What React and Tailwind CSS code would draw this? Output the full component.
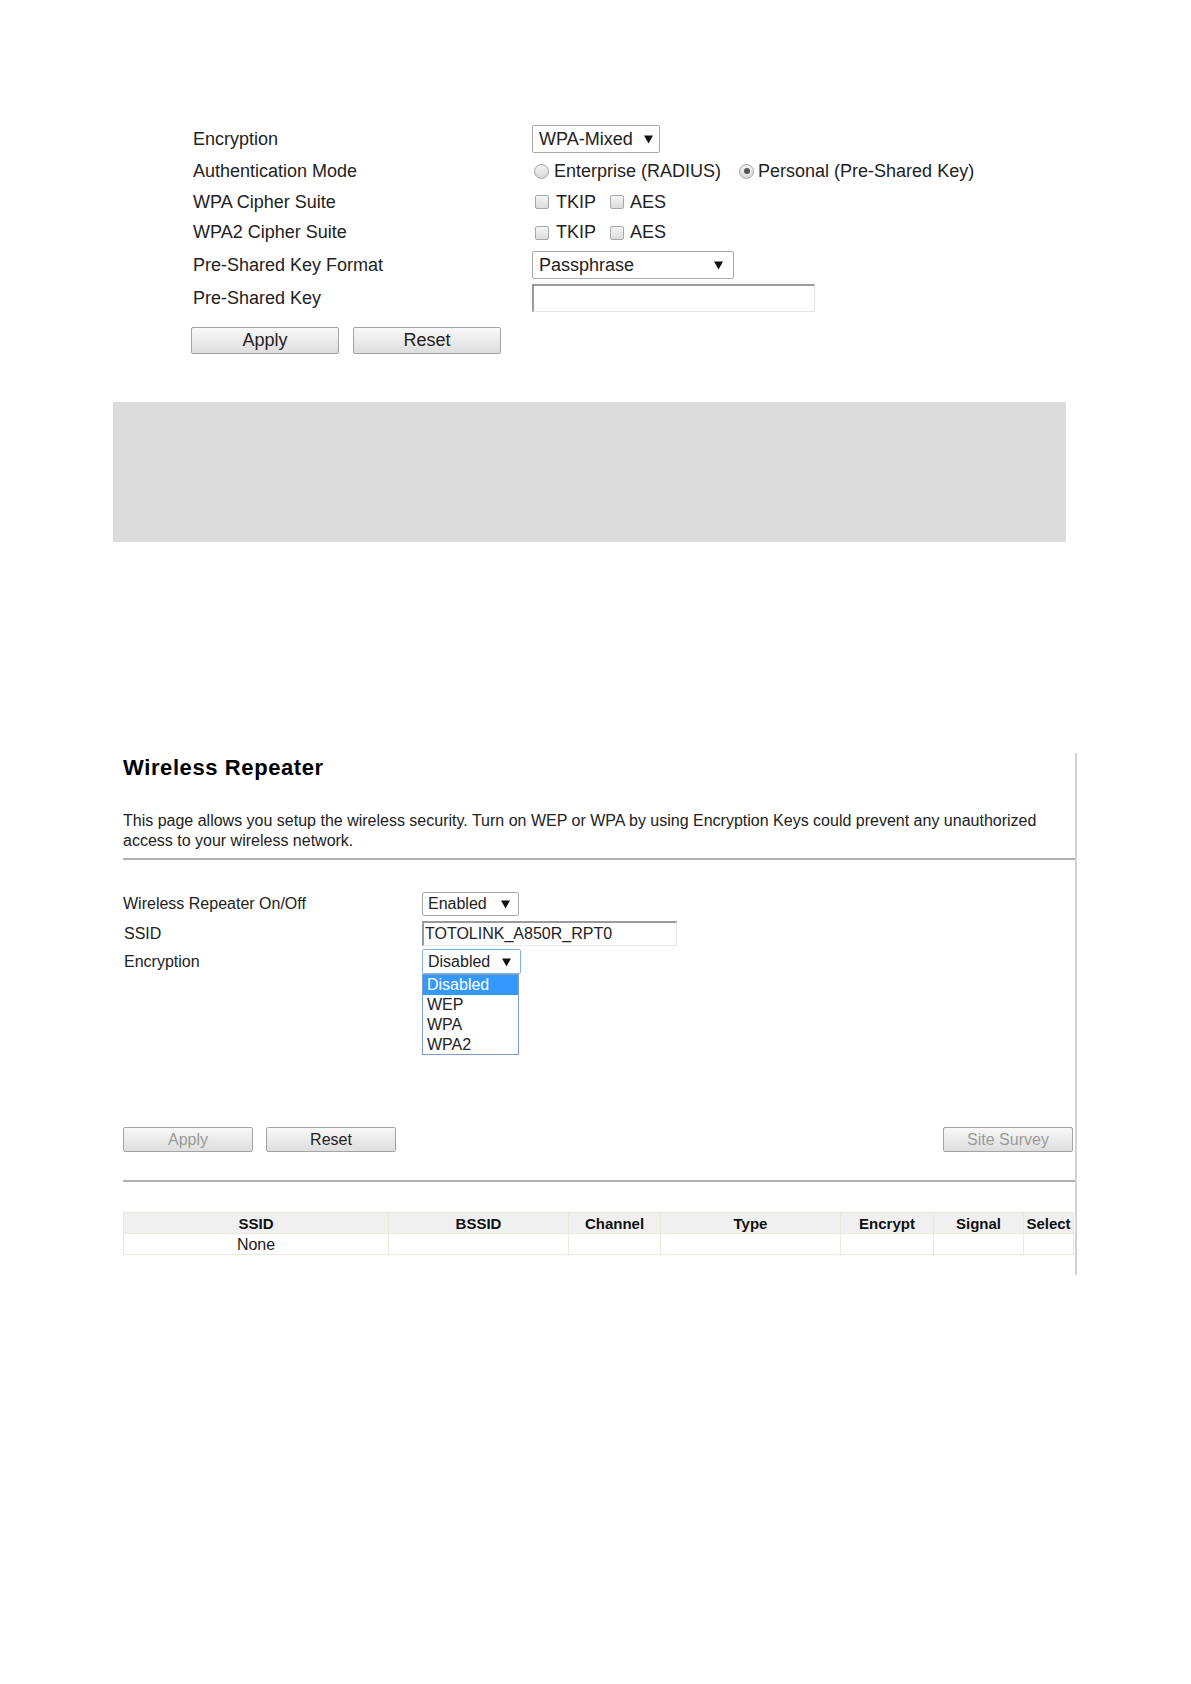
import React from "react";

function Arrow() {
  return (
    <svg width="9" height="10" viewBox="0 0 9 10" className="shrink-0">
      <path d="M0 1.5h9L4.5 9.5z" fill="#111" />
    </svg>
  );
}

function Radio({ checked }) {
  return (
    <span className="flex h-[15px] w-[15px] shrink-0 items-center justify-center rounded-full border border-[#a3a3a3] bg-gradient-to-b from-[#f4f4f4] to-[#d9d9d9]">
      {checked && <span className="h-[6px] w-[6px] rounded-full bg-[#555]"></span>}
    </span>
  );
}

function Check() {
  return (
    <span className="block h-[14px] w-[14px] shrink-0 rounded-[2px] border border-[#a8a8a8] bg-gradient-to-b from-[#f5f5f5] to-[#dcdcdc]"></span>
  );
}

function Btn({ label, disabled, big }) {
  return (
    <div
      className={
        big
          ? "flex h-[27px] w-[148px] items-center justify-center rounded-[2px] border border-[#a3a3a3] bg-gradient-to-b from-[#f8f8f8] to-[#dedede] text-[18px] text-[#222]"
          : disabled
          ? "flex h-[25px] w-[130px] items-center justify-center rounded-[2px] border border-[#a3a3a3] bg-gradient-to-b from-[#f8f8f8] to-[#dedede] text-[16px] text-[#9a9a9a]"
          : "flex h-[25px] w-[130px] items-center justify-center rounded-[2px] border border-[#a3a3a3] bg-gradient-to-b from-[#f8f8f8] to-[#dedede] text-[16px] text-[#222]"
      }
    >
      {label}
    </div>
  );
}

const columns = [
  { name: "SSID", w: "w-[265px]" },
  { name: "BSSID", w: "w-[180px]" },
  { name: "Channel", w: "w-[92px]" },
  { name: "Type", w: "w-[180px]" },
  { name: "Encrypt", w: "w-[93px]" },
  { name: "Signal", w: "w-[90px]" },
  { name: "Select", w: "w-[50px]" },
];

function CipherRow({ label }) {
  return (
    <>
      <div className="w-[339px]">{label}</div>
      <div className="ml-[3px] flex items-center">
        <Check />
        <span className="ml-[7px]">TKIP</span>
        <div className="ml-[14px]">
          <Check />
        </div>
        <span className="ml-[6px]">AES</span>
      </div>
    </>
  );
}

export default function App() {
  return (
    <div className="min-h-[1684px] w-[1191px] bg-white font-['Liberation_Sans',Arial,sans-serif] text-[#222]">
      {/* Security settings */}
      <div className="pl-[193px] pt-[123px] text-[18px]">
        <div className="flex h-[32px] items-center">
          <div className="w-[339px]">Encryption</div>
          <div className="flex h-[28px] w-[128px] items-center justify-between rounded-[2px] border border-[#a9a9a9] pl-[6px] pr-[6px]">
            <span>WPA-Mixed</span>
            <Arrow />
          </div>
        </div>
        <div className="flex h-[32px] items-center">
          <div className="w-[339px]">Authentication Mode</div>
          <div className="ml-[2px] flex items-center">
            <Radio />
            <span className="ml-[5px]">Enterprise (RADIUS)</span>
            <div className="ml-[18px]">
              <Radio checked />
            </div>
            <span className="ml-[4px]">Personal (Pre-Shared Key)</span>
          </div>
        </div>
        <div className="flex h-[30px] items-center">
          <CipherRow label="WPA Cipher Suite" />
        </div>
        <div className="flex h-[31px] items-center">
          <CipherRow label="WPA2 Cipher Suite" />
        </div>
        <div className="flex h-[34px] items-center">
          <div className="w-[339px]">Pre-Shared Key Format</div>
          <div className="flex h-[28px] w-[202px] items-center justify-between rounded-[2px] border border-[#a9a9a9] pl-[6px] pr-[10px]">
            <span>Passphrase</span>
            <Arrow />
          </div>
        </div>
        <div className="flex h-[32px] items-center">
          <div className="w-[339px]">Pre-Shared Key</div>
          <div className="h-[28px] w-[283px] border-b border-l-2 border-r border-t-2 border-b-[#e6e6e6] border-l-[#9a9a9a] border-r-[#e6e6e6] border-t-[#9a9a9a] bg-white"></div>
        </div>
        <div className="ml-[-2px] mt-[13px] flex gap-[14px]">
          <Btn label="Apply" big />
          <Btn label="Reset" big />
        </div>
      </div>

      <div className="ml-[113px] mt-[48px] h-[140px] w-[953px] bg-[#dcdcdc]"></div>

      {/* Wireless Repeater */}
      <div className="ml-[123px] mt-[211px] h-[522px] w-[954px] border-r-2 border-[#d2d2d2] pt-[4px]">
        <h1 className="text-[22px] font-bold leading-[22px] tracking-[0.6px] text-black">Wireless Repeater</h1>
        <p className="mt-[32px] text-[16px] leading-[20px]">
          This page allows you setup the wireless security. Turn on WEP or WPA by using Encryption Keys could prevent any unauthorized access to your wireless network.
        </p>
        <div className="mt-[7px] border-t-2 border-[#b2b2b2]"></div>

        <div className="mt-[30px] text-[16px]">
          <div className="flex h-[28px] items-center">
            <div className="w-[299px]">Wireless Repeater On/Off</div>
            <div className="flex h-[24px] w-[97px] items-center justify-between rounded-[2px] border border-[#a9a9a9] pl-[5px] pr-[8px]">
              <span>Enabled</span>
              <Arrow />
            </div>
          </div>
          <div className="flex h-[31px] items-center">
            <div className="w-[299px] pl-[1px]">SSID</div>
            <div className="flex h-[25px] w-[255px] items-center border-b border-l-2 border-r border-t-2 border-b-[#e6e6e6] border-l-[#9a9a9a] border-r-[#e6e6e6] border-t-[#9a9a9a] pl-[1px]">
              TOTOLINK_A850R_RPT0
            </div>
          </div>
          <div className="flex h-[25px] items-center">
            <div className="w-[299px] pl-[1px]">Encryption</div>
            <div className="relative">
              <div className="flex h-[25px] w-[99px] items-center justify-between rounded-[2px] border border-[#7fb2e6] pl-[5px] pr-[9px]">
                <span>Disabled</span>
                <Arrow />
              </div>
              <div className="absolute left-0 top-[25px] w-[97px] border border-[#7f9dc4] bg-white">
                <div className="h-[20px] bg-[#3399ff] pl-[4px] leading-[20px] text-white">Disabled</div>
                <div className="h-[20px] pl-[4px] leading-[20px]">WEP</div>
                <div className="h-[20px] pl-[4px] leading-[20px]">WPA</div>
                <div className="h-[19px] pl-[4px] leading-[20px]">WPA2</div>
              </div>
            </div>
          </div>
        </div>

        <div className="mt-[153px] flex items-center">
          <Btn label="Apply" disabled />
          <div className="ml-[13px]">
            <Btn label="Reset" />
          </div>
          <div className="ml-auto mr-[2px]">
            <Btn label="Site Survey" disabled />
          </div>
        </div>

        <div className="mt-[28px] border-t-2 border-[#b2b2b2]"></div>

        <table className="mt-[30px] w-[950px] table-fixed border-collapse">
          <thead>
            <tr className="h-[21px] bg-[#f0f0f0]">
              {columns.map((c) => (
                <th key={c.name} className={`${c.w} border border-[#ece8dc] p-0 text-center text-[15px] font-bold leading-[19px] text-[#111]`}>
                  {c.name}
                </th>
              ))}
            </tr>
          </thead>
          <tbody>
            <tr className="h-[21px]">
              <td className="border border-[#ece8dc] p-0 text-center text-[16px] leading-[19px]">None</td>
              <td className="border border-[#ece8dc] p-0"></td>
              <td className="border border-[#ece8dc] p-0"></td>
              <td className="border border-[#ece8dc] p-0"></td>
              <td className="border border-[#ece8dc] p-0"></td>
              <td className="border border-[#ece8dc] p-0"></td>
              <td className="border border-[#ece8dc] p-0"></td>
            </tr>
          </tbody>
        </table>
      </div>
    </div>
  );
}
